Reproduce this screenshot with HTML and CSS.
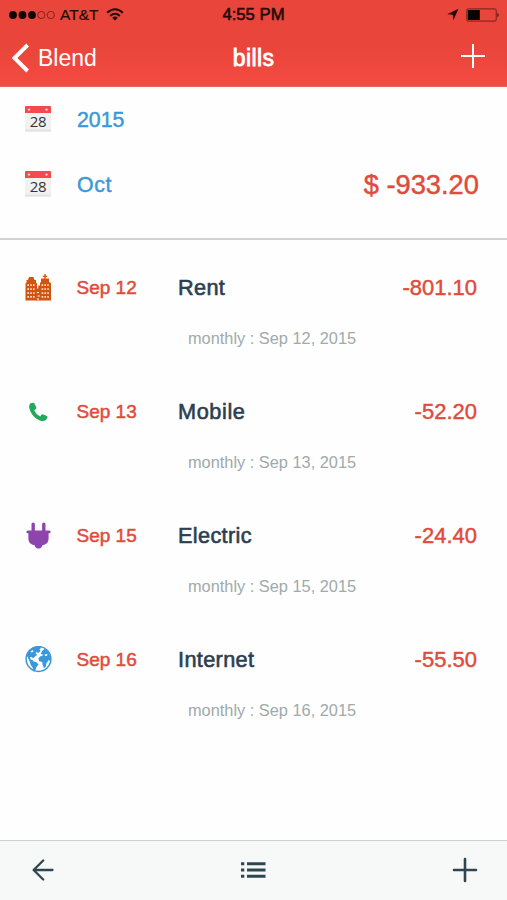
FILE: index.html
```html
<!DOCTYPE html>
<html lang="en">
<head>
<meta charset="utf-8">
<title>bills</title>
<link rel="stylesheet" href="styles.css">
</head>
<body>
<svg class="defs" aria-hidden="true">
  <symbol id="calendar" viewBox="0 0 28 28">
    <rect x="1" y="2" width="26" height="25" rx="1" fill="#f1f1f1"/>
    <rect x="1" y="24.5" width="26" height="2" fill="#e3e3e3"/>
    <path d="M1 8V2q0-1 1-1h24q1 0 1 1v6z" fill="#f5494b"/>
    <circle cx="5" cy="4.6" r="1.2" fill="#ffd2d2"/><circle cx="22.5" cy="4.6" r="1.2" fill="#ffd2d2"/>
  </symbol>
</svg>
<div class="app">
  <header class="header">
    <div class="status">
      <div class="carrier">
        <svg width="48" height="12" viewBox="0 0 48 12"><g fill="#100504"><circle cx="5" cy="6" r="3.9"/><circle cx="14.5" cy="6" r="3.9"/><circle cx="24" cy="6" r="3.9"/></g><g fill="none" stroke="#71211b" stroke-width=".9"><circle cx="33.3" cy="6" r="3.6"/><circle cx="42.8" cy="6" r="3.6"/></g></svg>
        <span class="carrier-name">AT&amp;T</span>
        <svg class="wifi" width="18" height="13" viewBox="0 0 18 13"><g fill="none" stroke="#240a08" stroke-width="2"><path d="M1.2 4.7Q9-2.2 16.8 4.7"/><path d="M4.1 7.9Q9 3.7 13.9 7.9"/></g><path d="M6.1 9.7Q9 7.5 11.9 9.7L9 12.6z" fill="#240a08"/></svg>
      </div>
      <span class="time">4:55 PM</span>
      <div class="indicators">
        <svg width="12" height="13" viewBox="0 0 12 13"><path d="M11.5.8 6.4 12.2 5.8 6.8.3 6.2z" fill="#240a08"/></svg>
        <svg width="34" height="14" viewBox="0 0 34 14"><rect x=".8" y=".9" width="29.4" height="12.2" rx="1.3" fill="none" stroke="#71211b"/><rect x="1.8" y="2" width="12" height="10" fill="#0b0202"/><path d="M31.5 4.7q2.2 2.3 0 4.6z" fill="#240a08"/></svg>
      </div>
    </div>
    <nav class="nav">
      <div class="back">
        <svg width="20" height="30" viewBox="0 0 20 30"><path d="M17.6 2 4.5 15l13.1 13" fill="none" stroke="#fff" stroke-width="3.9"/></svg>
        <span>Blend</span>
      </div>
      <h1>bills</h1>
      <svg class="add" width="24" height="24" viewBox="0 0 24 24"><path d="M12 0v24M0 12h24" stroke="#fff" stroke-width="2"/></svg>
    </nav>
  </header>

  <section class="summary">
    <div class="period">
      <div class="cal"><svg width="28" height="28"><use href="#calendar"/></svg><span>28</span></div>
      <span class="label">2015</span>
    </div>
    <div class="period">
      <div class="cal"><svg width="28" height="28"><use href="#calendar"/></svg><span>28</span></div>
      <span class="label oct">Oct</span>
      <span class="total">$ -933.20</span>
    </div>
  </section>

  <main class="bills">
    <article class="bill">
      <svg class="icon" width="28" height="28" viewBox="0 0 28 28">
        <path d="M1.5 26.5V9.5l1-1V6H4l1-3h4.5l1 3H12v2.5l1 1v17zM16 26.5V9l1-1V4.5h3.3V3h-1.5V1.8h1.5V0h1.4v1.8h1.5V3h-1.5v1.500H25V8l2 1v17.500z" fill="#d35411"/>
        <path d="M12 26.500v-9h1v-3h1.200v-3h2v15z" fill="#d35411"/>
        <path d="M3.400 11.200h7.500M3.400 15.200h7.500M3.400 19.200h7.500M3.400 22.800h7.500M17.600 11.200h8M17.600 15.200h8M17.600 19.200h8M17.600 22.800h8" stroke="#ffe2ca" stroke-width="1.800" stroke-dasharray="1.600 1.200"/>
        <path d="M12.800 18.500h2.200M13.600 22h2.200M12.800 25h2.200" stroke="#fff" stroke-width="1"/>
      </svg>
      <span class="date">Sep 12</span><span class="name">Rent</span><span class="amount">-801.10</span>
      <p class="note">monthly : Sep 12, 2015</p>
    </article>
    <article class="bill">
      <svg class="icon" width="28" height="28" viewBox="0 0 28 28"><path d="M8.800 4.700 6.100 5.600Q4.800 7.200 5.200 9.700c1.500 6.500 5.800 11.300 12 13.200q3.100.7 5-1.200l1.400-2.500q0-.7-.8-1.100l-4.100-1.800q-.8-.3-1.400.4l-1.100 1.700q-3.900-1.600-6-6l1.700-1.400q.8-.6.4-1.400l-1.900-4.100q-.4-1-1.700-.8z" fill="#22aa5c"/></svg>
      <span class="date">Sep 13</span><span class="name mobile">Mobile</span><span class="amount">-52.20</span>
      <p class="note">monthly : Sep 13, 2015</p>
    </article>
    <article class="bill">
      <svg class="icon" width="28" height="28" viewBox="0 0 28 28"><path d="M7.500 8.500V2.200q0-1.700 1.700-1.700t1.700 1.700v6.300h7.200V2.200q0-1.700 1.700-1.700t1.700 1.700v6.300h3.700q1.400 0 1.400 1.400t-1.400 1.300h-.6v5.400q0 4.800-4.300 6.200l-2.300.6v1.300L16 26.500h-3l-2-1.800v-1.300l-2.300-.6q-4.300-1.400-4.300-6.200v-5.400h-.6q-1.400 0-1.400-1.300t1.400-1.400z" fill="#8e44ad"/></svg>
      <span class="date">Sep 15</span><span class="name">Electric</span><span class="amount">-24.40</span>
      <p class="note">monthly : Sep 15, 2015</p>
    </article>
    <article class="bill">
      <svg class="icon" width="28" height="28" viewBox="0 0 28 28"><circle cx="14.500" cy="13" r="12.400" fill="#fff" stroke="#3b98d8" stroke-width="1.500"/><g transform="translate(.5 -1)"><path d="M2 10Q4 4 10 2l5-.5 2 1.500-2 1 1 2-2 2-2-1-1 1 1.500 2-2 1.500-2 2-1-1.200-2-.2.7 2.500 2.300.6.5 1.400 3 .6 2 2.200-2 2.500-1.500 4-1.500.5-1-4-2-3-.6-2.400L4 14z" fill="#3b98d8"/><path d="m17.500 6 3-2.500L24 7l2.500 6-1 3-1.500-1-1 2-1 1-.8 4-1.800 1-1.200-3-.5-3-3-.8-.8-3 2-2 2-.3.2-1.600-1.800-.3z" fill="#3b98d8"/><path d="m6 6.500 2-1.400 1 1.300-1.800 1.200zM20 9.500l3-.4-.5 1.600-2 .3z" fill="#fff"/></g></svg>
      <span class="date">Sep 16</span><span class="name">Internet</span><span class="amount">-55.50</span>
      <p class="note">monthly : Sep 16, 2015</p>
    </article>
  </main>

  <footer class="toolbar">
    <svg width="22" height="22" viewBox="0 0 22 22"><path d="M20.500 11H2M11.200 1.500 1.600 11l9.600 9.500" fill="none" stroke="#2f4650" stroke-width="2.300" stroke-linecap="round" stroke-linejoin="round"/></svg>
    <svg width="26" height="18" viewBox="0 0 26 18"><path d="M1 2.800h3.300M1 9h3.300M1 15.200h3.300M7 2.800h18.500M7 9h18.500M7 15.200h18.500" stroke="#2f4650" stroke-width="3"/></svg>
    <svg width="26" height="26" viewBox="0 0 26 26"><path d="M13 2v22M2 13h22" stroke="#2f4650" stroke-width="2.600" stroke-linecap="round"/></svg>
  </footer>
</div>
</body>
</html>
```
FILE: styles.css
```css
* { box-sizing: border-box; }
body { margin: 0; font-family: "Liberation Sans", Arial, sans-serif; background: #fefefe; }
svg { display: block; flex: none; }
.defs { width: 0; height: 0; position: absolute; }
.app { width: 507px; height: 900px; display: flex; flex-direction: column; overflow: hidden; }

.header { height: 87px; background: linear-gradient(#e9453a 0 55%, #f44b42); flex: none; border-bottom: 1px solid #e9665e; }
.status { height: 29px; display: grid; grid-template-columns: 1fr auto 1fr; align-items: center; padding: 0 7px 0 8px; color: #240a08; }
.carrier { display: flex; align-items: center; }
.carrier-name { font-size: 15.5px; width: 39px; margin: 1px 7px 0 4px; -webkit-text-stroke: .2px; }
.wifi { margin-top: -1px; }
.time { margin-left: -1px; font-size: 16.7px; padding-top: 1px; -webkit-text-stroke: .6px; }
.indicators { display: flex; justify-content: flex-end; align-items: center; gap: 7px; }
.nav { height: 57px; display: grid; grid-template-columns: 1fr auto 1fr; align-items: center; padding: 1px 22px 0 10px; color: #fff; }
.back { display: flex; align-items: center; gap: 8px; font-size: 23px; }
.nav h1 { margin-block: 0; margin-inline: 12px 0; font-size: 23px; font-weight: 400; letter-spacing: .4px; -webkit-text-stroke: .8px; }
.add { justify-self: end; margin-top: -5px; }

.summary { height: 153px; padding-top: 1px; border-bottom: 2px solid #d3d3d3; flex: none; }
.period { height: 65px; display: flex; align-items: center; padding: 0 28px 0 24px; }
.cal { width: 28px; height: 28px; display: grid; margin-top: -3px; }
.cal > * { grid-area: 1 / 1; }
.cal span { font: 15px "Open Sans", sans-serif; line-height: 20px; text-align: center; padding-top: 6px; letter-spacing: -.4px; color: #333; }
.label { margin-left: 25px; font-size: 21.3px; color: #3b98d8; -webkit-text-stroke: .45px; }
.oct { letter-spacing: .6px; }
.total { margin: -2px 0 0 auto; font-size: 27.3px; color: #e04b3c; -webkit-text-stroke: .45px; }

.bills { flex: 1; padding: 16px 30px 0 24px; }
.bill { height: 124px; display: grid; grid-template-columns: 52.5px 101.5px 1fr auto; grid-template-rows: 63px 38px; align-items: center; }
.date { font-size: 19px; color: #e04b3c; -webkit-text-stroke: .5px; }
.name { font-size: 21.7px; letter-spacing: .35px; color: #2c3e50; -webkit-text-stroke: .6px; }
.mobile { letter-spacing: .6px; }
.amount { font-size: 22px; color: #e04b3c; -webkit-text-stroke: .45px; }
.note { grid-column: 3 / 5; margin: 0 0 0 10px; font-size: 16.35px; color: #a0aaaa; }

.toolbar { height: 60px; flex: none; display: flex; align-items: center; justify-content: space-between; padding: 0 29px 2px 32px; background: #f7f8f8; border-top: 1px solid #d0d0d0; }
```
